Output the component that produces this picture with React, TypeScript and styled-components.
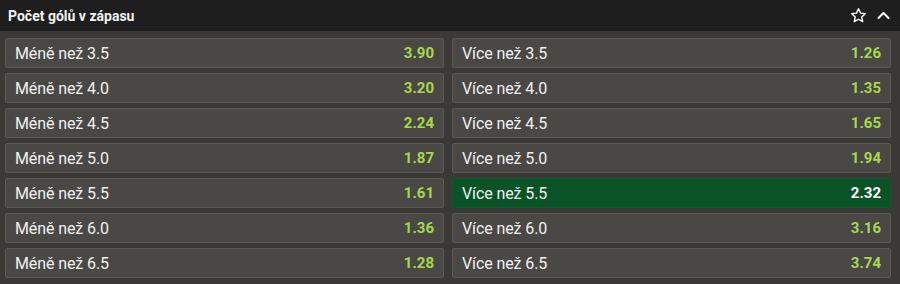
import { Fragment } from "react";
import styled, { createGlobalStyle } from "styled-components";

const GlobalStyle = createGlobalStyle`
  body {
    margin: 0;
    background: #3a3936;
    font-family: Roboto, "Liberation Sans", sans-serif;
  }
`;

const Wrapper = styled.div`
  width: 900px;
  height: 284px;
  background: #3a3936;
  overflow: hidden;
`;

const Header = styled.div`
  height: 31px;
  background: #1e1e1e;
  display: flex;
  align-items: center;
  justify-content: space-between;
  padding: 0 9px 0 8px;
  box-sizing: border-box;
`;

const Title = styled.h3`
  margin: 0;
  color: #f2f2f2;
  font-size: 14px;
  font-weight: 700;
`;

const Icons = styled.div`
  display: flex;
  align-items: center;
  gap: 9px;
  svg {
    display: block;
  }
`;

const Grid = styled.div`
  display: grid;
  grid-template-columns: 439px 439px;
  column-gap: 8px;
  row-gap: 5px;
  padding: 7px 9px 0 5px;
`;

const Cell = styled.div<{ selected?: boolean }>`
  height: 30px;
  box-sizing: border-box;
  display: flex;
  align-items: center;
  justify-content: space-between;
  padding: 0 9px 0 9px;
  border: 1px solid ${(props) => (props.selected ? "#0b5a2a" : "#5b5956")};
  border-radius: 2px;
  background: ${(props) => (props.selected ? "#0a5327" : "#4a4845")};
  cursor: pointer;
`;

const Label = styled.span`
  color: #f0f0f0;
  font-size: 16px;
  letter-spacing: -0.1px;
`;

const Odd = styled.span<{ selected?: boolean }>`
  color: ${(props) => (props.selected ? "#ffffff" : "#a6d84b")};
  font-size: 15px;
  font-weight: 700;
`;

const lines = ["3.5", "4.0", "4.5", "5.0", "5.5", "6.0", "6.5"];
const under = ["3.90", "3.20", "2.24", "1.87", "1.61", "1.36", "1.28"];
const over = ["1.26", "1.35", "1.65", "1.94", "2.32", "3.16", "3.74"];

function App() {
  return (
    <Wrapper>
      <GlobalStyle />
      <Header>
        <Title>Počet gólů v zápasu</Title>
        <Icons>
          <svg width="17" height="17" viewBox="0 0 24 24" fill="none" stroke="#fff" strokeWidth="2" strokeLinejoin="round">
            <polygon points="12 2.5 14.9 8.6 21.5 9.4 16.6 14 17.9 20.6 12 17.3 6.1 20.6 7.4 14 2.5 9.4 9.1 8.6 12 2.5" />
          </svg>
          <svg width="15" height="15" viewBox="0 0 24 24" fill="none" stroke="#fff" strokeWidth="3.2" strokeLinecap="round" strokeLinejoin="round">
            <polyline points="4 16 12 8 20 16" />
          </svg>
        </Icons>
      </Header>
      <Grid>
        {lines.map((line, i) => (
          <Fragment key={line}>
            <Cell>
              <Label>Méně než {line}</Label>
              <Odd>{under[i]}</Odd>
            </Cell>
            <Cell selected={line === "5.5"}>
              <Label>Více než {line}</Label>
              <Odd selected={line === "5.5"}>{over[i]}</Odd>
            </Cell>
          </Fragment>
        ))}
      </Grid>
    </Wrapper>
  );
}

export default App;
